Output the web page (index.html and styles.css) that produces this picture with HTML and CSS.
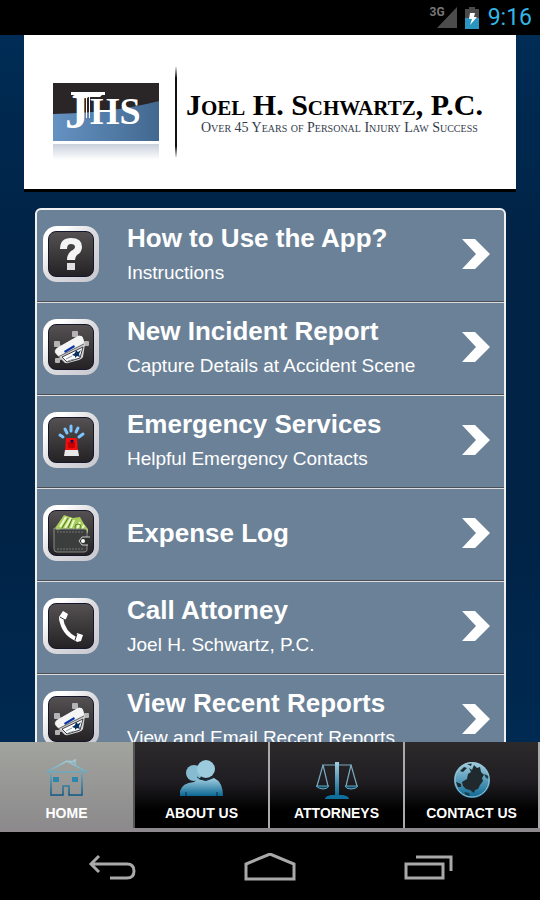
FILE: index.html
```html
<!DOCTYPE html>
<html lang="en">
<head>
    <meta charset="UTF-8">
    <meta name="viewport" content="width=device-width, initial-scale=1.0">
    <title>Joel H. Schwartz, P.C.</title>
    <link rel="stylesheet" href="styles.css">
</head>
<body>
    <!-- shared shapes -->
    <svg class="defs" width="0" height="0" aria-hidden="true">
        <defs>
            <linearGradient id="blue" x1="0" y1="0" x2="0" y2="1">
                <stop offset="0" stop-color="#a4cfe0"/>
                <stop offset="1" stop-color="#0b6793"/>
            </linearGradient>
            <linearGradient id="houseBlue" gradientUnits="userSpaceOnUse" x1="0" y1="0" x2="0" y2="38">
                <stop offset="0" stop-color="#a9cfdc"/>
                <stop offset="0.4" stop-color="#5fa3bd"/>
                <stop offset="1" stop-color="#065380"/>
            </linearGradient>
            <linearGradient id="logoBlue" x1="0" y1="0" x2="1" y2="0">
                <stop offset="0" stop-color="#6592c2"/>
                <stop offset="1" stop-color="#42688f"/>
            </linearGradient>
            <linearGradient id="reflection" x1="0" y1="0" x2="0" y2="1">
                <stop offset="0" stop-color="#c9d0dc"/>
                <stop offset="1" stop-color="#ffffff"/>
            </linearGradient>
            <symbol id="car" viewBox="0 0 44 44">
                <g fill="#b4b4b8">
                    <rect x="5" y="16" width="6" height="6" rx="1"/>
                    <rect x="23" y="6" width="6" height="6" rx="1"/>
                    <rect x="35" y="16" width="5" height="5" rx="1"/>
                    <rect x="6" y="33" width="5" height="5" rx="1"/>
                </g>
                <path d="M28 10 30 17M36 18H39M10 19 12 24M9 35 13 33" stroke="#b4b4b8" stroke-width="2"/>
                <path d="M8 23 29 11Q33 10 34 13L36 19 34 32Q33 34 30 35L19 38Q16 39 14 36L7 29Q4 26 8 23Z" fill="#d4d4d4"/>
                <path d="M8 23 29 11Q33 10 34 13L35 18 10 31Q4 27 8 23Z" fill="#f4f4f4"/>
                <path d="M15 26 25 20 26 22 16 28Z" fill="#0a36a8"/>
                <path d="M9 32 35 19" stroke="#666" stroke-width="1"/>
                <path d="M13 32 34 22 31 33 18 37Z" fill="#fff" stroke="#404044" stroke-width="1"/>
                <path d="M23 30 26 28 27 25 29 27 32 25 30 29 31 32 28 31 26 33 26 31Z" fill="#08315f"/>
                <path d="M17 34 23 31M19 36 25 34" stroke="#8899a8" stroke-width="1"/>
            </symbol>
            <symbol id="arrow" viewBox="0 0 28 30">
                <path d="M0 0H13L28 15 13 30H0L14 15Z" fill="#fff"/>
            </symbol>
        </defs>
    </svg>

    <div class="screen">
        <div class="status-bar">
            <span class="network">3G</span>
            <svg class="signal" width="20" height="21" viewBox="0 0 20 21"><path d="M20 0V21H0Z" fill="#4c4c4c"/></svg>
            <svg class="battery" width="14" height="22" viewBox="0 0 14 22">
                <path d="M4 0H10V2H14V11H0V2H4Z" fill="#4a4a4a"/>
                <path d="M0 11H14V22H0Z" fill="#2a96bf"/>
                <path d="M5 6H10L9 10H12L5 18 7 12H4Z" fill="#fff"/>
            </svg>
            <span class="clock">9:16</span>
        </div>

        <main class="content">
            <header class="banner">
                <svg class="logo" width="106" height="78" viewBox="0 0 106 78" role="img" aria-label="JHS">
                    <rect width="106" height="58" fill="#2a2526"/>
                    <path d="M0 31Q60 30 106 18V58H0Z" fill="url(#logoBlue)"/>
                    <text x="12" y="45" class="logo-letters big">J</text>
                    <path d="M18 9H52V12H49L47 14H23L20 12H18Z" fill="#fff"/>
                    <path d="M33 14H34V35H33ZM36 14H37V35H36Z" fill="#fff"/>
                    <text x="37" y="41" class="logo-letters">HS</text>
                    <rect y="61" width="106" height="16" fill="url(#reflection)"/>
                </svg>
                <svg class="divider" width="4" height="92" viewBox="0 0 4 92"><path d="M2 0 3 12V80L2 92 1 80V12Z" fill="#111"/></svg>
                <div class="firm">
                    <h1 class="firm-name">Joel H. Schwartz, P.C.</h1>
                    <p class="tagline">Over 45 Years of Personal Injury Law Success</p>
                </div>
            </header>

            <nav class="menu">
                <a class="menu-item" href="#instructions">
                    <span class="tile">
                        <svg width="44" height="44" viewBox="0 0 44 44">
                            <path d="M11 17Q11 6 22 6 33 6 33 15 33 20 28 23 26 25 26 28H18Q18 22 22 19 26 17 26 15 26 12 22 12 18 12 18 17Z" fill="#f4f4f4"/>
                            <rect x="18" y="31" width="8" height="7" fill="#e0e0e0"/>
                        </svg>
                    </span>
                    <span class="item-text">
                        <span class="item-title">How to Use the App?</span>
                        <span class="item-sub">Instructions</span>
                    </span>
                    <svg class="arrow" width="28" height="30"><use href="#arrow"/></svg>
                </a>
                <a class="menu-item" href="#report">
                    <span class="tile"><svg width="44" height="44"><use href="#car"/></svg></span>
                    <span class="item-text">
                        <span class="item-title">New Incident Report</span>
                        <span class="item-sub">Capture Details at Accident Scene</span>
                    </span>
                    <svg class="arrow" width="28" height="30"><use href="#arrow"/></svg>
                </a>
                <a class="menu-item" href="#emergency">
                    <span class="tile">
                        <svg width="44" height="44" viewBox="0 0 44 44">
                            <g stroke="#7cc4ff" stroke-width="3" stroke-linecap="round">
                                <path d="M11 17 14 19M16 11 18 15M22 8V13M29 10 27 14M34 16 30 19"/>
                            </g>
                            <path d="M17 20H28L29 34H16Z" fill="#f01010"/>
                            <path d="M19 24H26V30H19Z" fill="#c80000"/>
                            <path d="M21 22H25L23 26Z" fill="#16104c"/>
                            <path d="M16 32H29L30 38H15Z" fill="#e8e8e8"/>
                        </svg>
                    </span>
                    <span class="item-text">
                        <span class="item-title">Emergency Services</span>
                        <span class="item-sub">Helpful Emergency Contacts</span>
                    </span>
                    <svg class="arrow" width="28" height="30"><use href="#arrow"/></svg>
                </a>
                <a class="menu-item" href="#expenses">
                    <span class="tile">
                        <svg width="44" height="44" viewBox="0 0 44 44">
                            <path d="M6 17 15 4 24 7 31 6 35 13 39 18V22H6Z" fill="#a8cc5c"/>
                            <path d="M11 16 17 6M16 17 22 7M22 17 25 9M28 18 31 11M33 18 35 14" stroke="#eef6cc" stroke-width="2"/>
                            <path d="M13 17 19 7M19 17 23 8" stroke="#4f7d20" stroke-width="1"/>
                            <circle cx="29" cy="16" r="3" fill="none" stroke="#4f8a20"/>
                            <path d="M5 17Q8 20 12 18H35Q38 18 38 21V39Q38 41 35 41H8Q5 41 5 38Z" fill="#3c3e3e" stroke="#858985" stroke-width="1"/>
                            <path d="M8 21H34M8 38H34" stroke="#707471" stroke-dasharray="2 1"/>
                            <path d="M41 26H33L30 30 33 34H39" fill="#303232" stroke="#ccc"/>
                            <circle cx="34" cy="30" r="2" fill="#fff"/>
                        </svg>
                    </span>
                    <span class="item-text">
                        <span class="item-title">Expense Log</span>
                    </span>
                    <svg class="arrow" width="28" height="30"><use href="#arrow"/></svg>
                </a>
                <a class="menu-item" href="#call">
                    <span class="tile">
                        <svg width="44" height="44" viewBox="0 0 44 44">
                            <path d="M12 14Q14 29 27 35" fill="none" stroke="#fff" stroke-width="4"/>
                            <path d="M10 13 14 7 19 10 17 15 11 18Z" fill="#fff"/>
                            <path d="M26 36 28 29 34 31 32 37 28 38Z" fill="#fff"/>
                            <path d="M11 13 16 16M28 30 26 36" stroke="#333" stroke-width="1"/>
                        </svg>
                    </span>
                    <span class="item-text">
                        <span class="item-title">Call Attorney</span>
                        <span class="item-sub">Joel H. Schwartz, P.C.</span>
                    </span>
                    <svg class="arrow" width="28" height="30"><use href="#arrow"/></svg>
                </a>
                <a class="menu-item" href="#recent">
                    <span class="tile"><svg width="44" height="44"><use href="#car"/></svg></span>
                    <span class="item-text">
                        <span class="item-title">View Recent Reports</span>
                        <span class="item-sub">View and Email Recent Reports</span>
                    </span>
                    <svg class="arrow" width="28" height="30"><use href="#arrow"/></svg>
                </a>
            </nav>
        </main>

        <nav class="tabs">
            <a class="tab active" href="#home">
                <svg width="44" height="40" viewBox="0 0 44 40" fill="none" stroke="url(#houseBlue)" stroke-width="1.5">
                    <path d="M2 13 22 2 42 13ZM6 15V36H18V27H24V36H37V15"/>
                    <path d="M24 4Q24 1 27 3L30 1V7"/>
                    <path d="M8 18H14V23H8ZM27 18H33V23H27Z" fill="#2c86ad" stroke="none"/>
                </svg>
                <span>HOME</span>
            </a>
            <a class="tab" href="#about">
                <svg width="44" height="40" viewBox="0 0 44 40">
                    <path d="M0 37V32Q2 24 14 23L18 20 26 22 34 19Q43 23 43 37Z" fill="url(#blue)"/>
                    <circle cx="14" cy="14" r="8" fill="#86bbd2"/>
                    <path d="M17 18Q24 24 34 18" fill="none" stroke="#12384c"/>
                    <circle cx="26" cy="10" r="9" fill="#9ccbdd"/>
                    <path d="M6 37V33M37 37V33" stroke="#062c40"/>
                </svg>
                <span>ABOUT US</span>
            </a>
            <a class="tab" href="#attorneys">
                <svg width="44" height="40" viewBox="0 0 44 40">
                    <path d="M7 6H37M8 6 2 27M8 6 13 27M36 6 31 27M36 6 42 27" stroke="#79abc0" stroke-width="1.2"/>
                    <path d="M1 27H14Q12 30 8 30T1 27ZM30 27H43Q41 30 36 30T30 27Z" fill="#17455c" stroke="#62a9c6"/>
                    <path d="M20 3H24V37H20Z" fill="url(#blue)"/>
                    <path d="M10 40Q10 37 16 36H28Q34 37 34 40Z" fill="#0e6f9c"/>
                </svg>
                <span>ATTORNEYS</span>
            </a>
            <a class="tab" href="#contact">
                <svg width="44" height="40" viewBox="0 0 44 40">
                    <circle cx="22" cy="21" r="18" fill="url(#blue)"/>
                    <path d="M19 9 22 11 24 6 27 9 30 8 31 13 34 16 32 19 33 22 30 26 28 30 25 31 24 34 20 31 16 30 13 27 12 23 17 20 18 15 21 13Z" fill="#1f292e"/>
                    <path d="M10 12 14 8 17 9 13 13ZM17 5 22 4 21 7ZM6 23 11 25 11 28 8 28Z" fill="#1f292e"/>
                    <path d="M34 15 39 17 39 20 36 19ZM14 33 19 34 20 37 16 36Z" fill="#1f3c49"/>
                    <circle cx="22" cy="21" r="17" fill="none" stroke="#9ac6d6"/>
                </svg>
                <span>CONTACT US</span>
            </a>
        </nav>

        <div class="system-bar">
            <button type="button" aria-label="Back">
                <svg width="54" height="30" viewBox="0 0 54 30"><path d="M15 3 7 11 15 19M7 11H43Q50 11 50 18T43 25H26" fill="none" stroke="#a9a9a9" stroke-width="3"/></svg>
            </button>
            <button type="button" aria-label="Home">
                <svg width="54" height="30" viewBox="0 0 54 30"><path d="M3 26V11L27 1 51 11V26Z" fill="none" stroke="#a9a9a9" stroke-width="3"/></svg>
            </button>
            <button type="button" aria-label="Recent apps">
                <svg width="54" height="30" viewBox="0 0 54 30"><path d="M4 11H41V25H4ZM14 4H49V18" fill="none" stroke="#a9a9a9" stroke-width="3"/></svg>
            </button>
        </div>
    </div>
</body>
</html>
```
FILE: styles.css
```css
* {
    box-sizing: border-box;
}
body {
    margin: 0;
    background: #000;
    font-family: "Liberation Sans", Arial, sans-serif;
    color: #fff;
}
a {
    color: inherit;
    text-decoration: none;
}
.defs {
    position: absolute;
}
.screen {
    display: flex;
    flex-direction: column;
    height: 100vh;
}

/* status bar */
.status-bar {
    display: flex;
    align-items: center;
    justify-content: flex-end;
    height: 35px;
    padding-right: 8px;
    flex-shrink: 0;
}
.network {
    align-self: flex-start;
    margin: 5px -8px 0 0;
    font: bold 12px/14px Roboto, sans-serif;
    color: #777;
}
.battery {
    margin: 0 9px 0 8px;
}
.clock {
    font: 23px/35px Roboto, sans-serif;
    color: #33b5e5;
}

/* scrolling page */
.content {
    flex: 1;
    min-height: 0;
    overflow: hidden;
    padding: 0 24px;
    background: linear-gradient(#002c55, #002346 30%, #002346 70%, #002a52);
}
.banner {
    display: flex;
    align-items: center;
    height: 154px;
    padding-left: 29px;
    background: #fff;
    box-shadow: 0 3px 0 #000;
}
.logo {
    margin-top: 20px;
}
.logo-letters {
    font: bold 38px "Liberation Serif", serif;
    fill: #fff;
}
.logo-letters.big {
    font-size: 48px;
}
.divider {
    margin: 0 8px 0 15px;
}
.firm {
    color: #000;
    font-family: "Liberation Serif", serif;
    font-variant: small-caps;
    white-space: nowrap;
}
.firm-name {
    margin: 0;
    font-size: 30px;
    line-height: 32px;
}
.tagline {
    margin: 0 0 0 15px;
    font-size: 14px;
    line-height: 14px;
    color: #333c4c;
}

/* main menu */
.menu {
    margin: 19px 10px 0 11px;
    border: 2px solid #f0f0f0;
    border-radius: 6px;
    background: #6b8197;
}
.menu-item {
    display: flex;
    align-items: center;
    height: 93px;
    padding: 0 14px 4px 6px;
    border-bottom: 1px solid #ddd;
    box-shadow: inset 0 -1px 0 #4a4f58;
}
.tile {
    width: 56px;
    height: 56px;
    padding: 5px;
    border-radius: 14px;
    background: linear-gradient(135deg, #fff 20%, #dcdce0 50%, #c6c6ce);
}
.tile svg {
    display: block;
    width: 46px;
    height: 46px;
    border: 1px solid #15152c;
    border-radius: 8px;
    background: linear-gradient(#555153, #242224);
}
.item-text {
    flex: 1;
    display: flex;
    flex-direction: column;
    gap: 8px;
    margin-left: 28px;
}
.item-title {
    font-size: 26px;
    line-height: 30px;
    font-weight: bold;
}
.item-sub {
    font-size: 19px;
    line-height: 24px;
}

/* bottom tabs */
.tabs {
    display: flex;
    flex-shrink: 0;
    height: 90px;
    border-bottom: 4px solid #8d898d;
}
.tab {
    flex: 1 1 0;
    display: flex;
    flex-direction: column;
    align-items: center;
    gap: 3px;
    padding-top: 17px;
    border-right: 2px solid #aaa;
    background: linear-gradient(#2d2a2c, #201e22 45%, #000 80%);
    font-size: 14px;
    line-height: 22px;
    font-weight: bold;
}
.tab.active {
    border-right-color: #555;
    background: linear-gradient(#a2a49e, #8c8a8c);
}

/* android buttons */
.system-bar {
    display: flex;
    justify-content: center;
    gap: 105px;
    height: 68px;
    flex-shrink: 0;
    background: #000;
}
.system-bar button {
    display: flex;
    align-items: center;
    padding: 4px 0 0;
    border: none;
    background: none;
}
```
